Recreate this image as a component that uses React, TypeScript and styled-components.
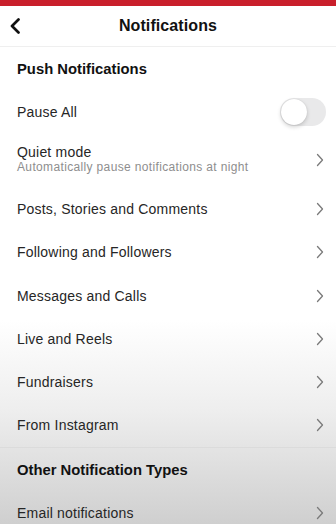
import { ReactElement } from 'react';
import styled, { createGlobalStyle } from 'styled-components';

const GlobalStyle = createGlobalStyle`
  html, body {
    margin: 0;
    padding: 0;
  }
  body {
    font-family: "Liberation Sans", Arial, sans-serif;
    color: #262626;
  }
`;

type Item = { label: string; sub?: string };

const pushItems: Item[] = [
  { label: 'Posts, Stories and Comments' },
  { label: 'Following and Followers' },
  { label: 'Messages and Calls' },
  { label: 'Live and Reels' },
  { label: 'Fundraisers' },
  { label: 'From Instagram' },
];

const Chevron = (): ReactElement => (
  <ChevronIcon viewBox="0 0 8 14" aria-hidden>
    <path d="M1.5 1.5 L6.5 7 L1.5 12.5" />
  </ChevronIcon>
);

const App = (): ReactElement => (
  <>
    <GlobalStyle />
    <Page>
      <StatusBar />
      <Header>
        <BackButton aria-label="Back">
          <svg viewBox="0 0 12 16" width="12" height="16">
            <path d="M9.5 1.5 L3 8 L9.5 14.5" />
          </svg>
        </BackButton>
        <Title>Notifications</Title>
        <span />
      </Header>

      <SectionTitle>Push Notifications</SectionTitle>
      <Row>
        <Label>Pause All</Label>
        <Toggle />
      </Row>
      <Row $tall>
        <TextBlock>
          <Label>Quiet mode</Label>
          <SubLabel>Automatically pause notifications at night</SubLabel>
        </TextBlock>
        <Chevron />
      </Row>
      {pushItems.map((item) => (
        <Row key={item.label}>
          <Label>{item.label}</Label>
          <Chevron />
        </Row>
      ))}

      <Divider />
      <SectionTitle>Other Notification Types</SectionTitle>
      <Row>
        <Label>Email notifications</Label>
        <Chevron />
      </Row>
    </Page>
  </>
);

export const Page = styled.div`
  width: 336px;
  height: 524px;
  overflow: hidden;
  display: flex;
  flex-direction: column;
  background: linear-gradient(
    to bottom,
    #ffffff 0px,
    #ffffff 320px,
    #eeeeee 410px,
    #cfcfcf 524px
  );
`;

export const StatusBar = styled.div`
  height: 6px;
  flex-shrink: 0;
  background: #c91f2b;
`;

export const Header = styled.header`
  height: 40px;
  flex-shrink: 0;
  display: grid;
  grid-template-columns: 40px 1fr 40px;
  align-items: center;
  border-bottom: 1px solid #efefef;
`;

export const BackButton = styled.button`
  border: 0;
  background: none;
  padding: 0 0 0 9px;
  display: flex;
  align-items: center;

  svg path {
    fill: none;
    stroke: #111;
    stroke-width: 2.7;
    stroke-linecap: round;
    stroke-linejoin: round;
  }
`;

export const Title = styled.h1`
  margin: 0;
  text-align: center;
  font-size: 16px;
  font-weight: 700;
  letter-spacing: 0.1px;
  color: #111;
`;

export const SectionTitle = styled.h2`
  margin: 0;
  height: 43px;
  flex-shrink: 0;
  display: flex;
  align-items: center;
  padding: 0 17px;
  font-size: 14.8px;
  font-weight: 700;
  color: #111;
`;

export const Row = styled.div<{ $tall?: boolean }>`
  height: ${(p) => (p.$tall ? '54px' : '43.3px')};
  flex-shrink: 0;
  display: flex;
  align-items: center;
  justify-content: space-between;
  padding: 0 10px 0 17px;
`;

export const TextBlock = styled.div`
  display: flex;
  flex-direction: column;
  gap: 0;
  margin-top: -3px;
`;

export const Label = styled.span`
  font-size: 14px;
  letter-spacing: 0.2px;
  color: #262626;
`;

export const SubLabel = styled.span`
  font-size: 12px;
  letter-spacing: 0.35px;
  color: #8e8e8e;
`;

export const ChevronIcon = styled.svg`
  width: 8px;
  height: 14px;
  margin-right: 2px;

  path {
    fill: none;
    stroke: #7a7a7a;
    stroke-width: 1.3;
    stroke-linecap: round;
    stroke-linejoin: round;
  }
`;

export const Toggle = styled.div`
  width: 46px;
  height: 28px;
  border-radius: 14px;
  background: #e9e9ea;
  position: relative;

  &::after {
    content: '';
    position: absolute;
    top: 1px;
    left: 1px;
    width: 26px;
    height: 26px;
    border-radius: 50%;
    background: #fff;
    box-shadow: 0 2px 4px rgba(0, 0, 0, 0.18), 0 0 1px rgba(0, 0, 0, 0.15);
  }
`;

export const Divider = styled.div`
  height: 1px;
  flex-shrink: 0;
  background: rgba(0, 0, 0, 0.04);
`;

export default App;
